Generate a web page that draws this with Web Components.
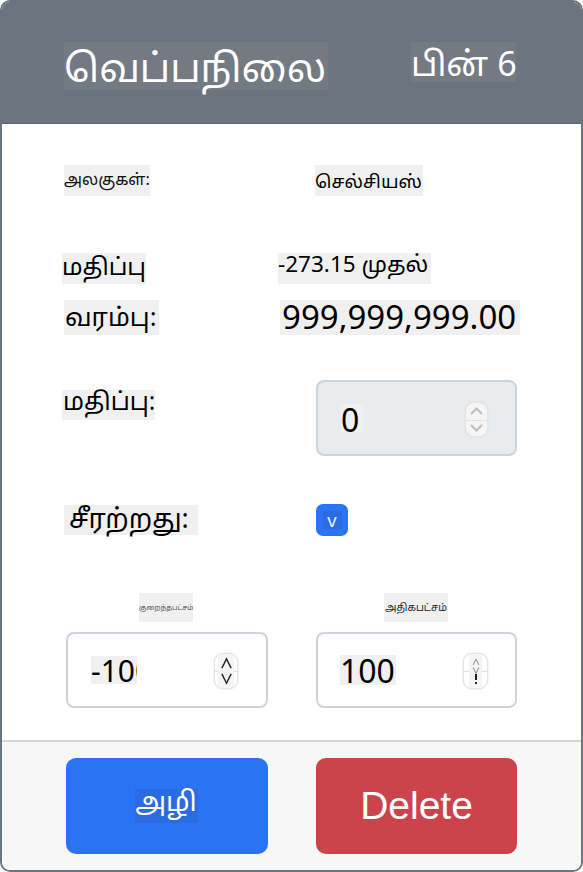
<!DOCTYPE html>
<html lang="ta">
<head>
<meta charset="utf-8">
<title>வெப்பநிலை</title>
<style>
html, body { margin: 0; background: #fff; }
body { font-family: "Noto Sans", "Noto Sans Tamil", sans-serif; }
</style>
</head>
<body>
<template id="patch-tpl">
<style>
:host {
    display: inline-flex;
    align-items: center;
    justify-content: var(--align, flex-start);
    box-sizing: border-box;
    background: var(--patch, #f0f0f0);
    white-space: pre;
    line-height: 1;
    font-family: "Noto Sans", "Noto Sans Tamil", sans-serif;
}
:host([clip]) { overflow: hidden; }
</style>
<slot></slot>
</template>

<template id="card-tpl">
<style>
:host {
    display: flex;
    flex-direction: column;
    box-sizing: border-box;
    width: 583px;
    height: 872px;
    border: 2px solid #6c757d;
    border-radius: 10px;
    overflow: hidden;
    background: #fff;
}
header {
    box-sizing: border-box;
    height: 122px;
    flex: none;
    background: #6c757d;
    color: #fff;
    display: grid;
    grid-template-columns: 347px 1fr;
    padding: 40px 0 0 62px;
    border-bottom: 1px solid #5c646b;
}
main { flex: 1; display: flex; flex-direction: column; }
footer {
    flex: none;
    box-sizing: border-box;
    height: 130px;
    background: #f7f7f7;
    border-top: 2px solid #d6d6d6;
    display: grid;
    grid-template-columns: 202px 201px;
    column-gap: 48px;
    padding: 16px 0 0 64px;
}
</style>
<header><slot name="title"></slot></header>
<main><slot></slot></main>
<footer><slot name="actions"></slot></footer>
</template>

<template id="row-tpl">
<style>
:host {
    display: grid;
    grid-template-columns: 250px 1fr;
    padding-left: 64px;
    box-sizing: border-box;
    height: var(--h, auto);
    margin-top: var(--top, 0);
    align-items: start;
}
</style>
<slot></slot>
</template>

<template id="num-tpl">
<style>
:host {
    display: flex;
    align-items: center;
    box-sizing: border-box;
    width: 201px;
    height: 76px;
    border: 2px solid #ced4da;
    border-radius: 8px;
    background: #fff;
    position: relative;
    padding-left: 22px;
    overflow: hidden;
}
:host([disabled]) { background: #e9ecef; }
.spin {
    position: absolute;
    right: var(--spin-right, 27px);
    top: var(--spin-top, 20px);
    width: var(--spin-w, 23px);
    height: var(--spin-h, 35px);
    box-sizing: border-box;
    border: 1px solid #e4e4e4;
    border-radius: 9px;
    background: #fff;
    box-shadow: 0 0 2px #d8d8d8;
    display: flex;
    flex-direction: column;
    overflow: hidden;
}
.spin::before {
    content: "";
    position: absolute;
    left: 0;
    right: 0;
    top: 50%;
    height: 1px;
    background: #e0e0e0;
}
:host([disabled]) .spin { background: #f5f5f5; }
.spin span {
    flex: 1;
    display: flex;
    align-items: center;
    justify-content: center;
}
svg { width: 15px; height: 10px; fill: none; stroke: #bdbdbd; stroke-width: 2; }
</style>
<slot></slot>
<div class="spin">
<slot name="spin">
<span><svg viewBox="0 0 15 10"><path d="M2 8 7.500 2.500 13 8"/></svg></span>
<span><svg viewBox="0 0 15 10"><path d="M2 2 7.500 7.500 13 2"/></svg></span>
</slot>
</div>
</template>

<template id="btn-tpl">
<style>
:host {
    display: flex;
    align-items: center;
    justify-content: center;
    box-sizing: border-box;
    height: 96px;
    border-radius: 10px;
    background: var(--bg, #2a73f4);
    color: #fff;
}
</style>
<slot></slot>
</template>

<template id="check-tpl">
<style>
:host {
    display: flex;
    align-items: center;
    justify-content: center;
    width: 32px;
    height: 32px;
    border-radius: 7px;
    background: #2a73f4;
}
</style>
<slot></slot>
</template>

<temp-card>
    <text-patch slot="title" style="width:264px;height:48px;font-size:39px;color:#fff;--patch:#737a82">வெப்பநிலை</text-patch>
    <text-patch slot="title" style="width:105px;height:40px;font-size:34px;color:#fff;--patch:#737a82;padding-top:1px">பின் 6</text-patch>

    <form-row style="--top:41px;--h:88px">
        <text-patch style="width:86px;height:31px;font-size:16px;color:#111;margin-left:-2px;padding-bottom:4px">அலகுகள்:</text-patch>
        <text-patch style="width:108px;height:31px;font-size:18.200px;color:#000;margin-left:-1px;padding-top:2px">செல்சியஸ்</text-patch>
    </form-row>
    <form-row style="--h:47px">
        <text-patch style="width:84px;height:31px;font-size:24px;color:#000;margin-left:-4px;padding-bottom:5px">மதிப்பு</text-patch>
        <text-patch style="width:153px;height:31px;font-size:22.500px;color:#000;margin-left:-38px;padding-bottom:8px">-273.15 முதல்</text-patch>
    </form-row>
    <form-row style="--h:80px">
        <text-patch style="width:95px;height:35px;font-size:25.500px;color:#000;padding-left:1px;margin-left:-2px;padding-bottom:2px">வரம்பு:</text-patch>
        <text-patch style="width:240px;height:35px;font-size:33px;color:#000;margin-left:-36px;padding-left:2px;padding-bottom:2px">999,999,999.00</text-patch>
    </form-row>
    <form-row style="--h:124px">
        <text-patch style="width:93px;height:30px;font-size:24.500px;color:#000;margin:10px 0 0 -4px;padding-left:1px;padding-bottom:8px">மதிப்பு:</text-patch>
        <num-field disabled><text-patch style="width:22px;height:28px;font-size:32px;color:#000;margin-left:1px;padding-top:3px">0</text-patch></num-field>
    </form-row>
    <form-row style="--h:89px">
        <text-patch style="width:134px;height:30px;font-size:27px;color:#000;padding-left:5px;margin:1px 0 0 -2px;padding-bottom:6px">சீரற்றது:</text-patch>
        <check-box><text-patch style="width:19px;height:18px;font-size:18.500px;color:#eaf1ff;--patch:#2a6be0;--align:center">v</text-patch></check-box>
    </form-row>
    <form-row style="--h:39px">
        <text-patch style="width:54px;height:29px;font-size:7px;color:#555;margin-left:73px">குறைந்தபட்சம்</text-patch>
        <text-patch style="width:64px;height:29px;font-size:10.200px;color:#222;margin-left:68px;padding-left:1px">அதிகபட்சம்</text-patch>
    </form-row>
    <form-row>
        <num-field style="width:202px;--spin-right:28px;--spin-top:19px;--spin-w:24px;--spin-h:36px">
            <text-patch clip style="width:46px;height:28px;font-size:30px;color:#000;margin-left:1px;padding-top:2px">-100</text-patch>
            <small-spin slot="spin" style="--mark:#222;--size:13px"></small-spin>
        </num-field>
        <num-field style="--spin-right:27px;--spin-top:19px;--spin-w:25px;--spin-h:36px">
            <text-patch style="width:56px;height:30px;font-size:32px;color:#000;padding-top:2px">100</text-patch>
            <small-spin slot="spin" style="--mark:#777;--size:8px" dots></small-spin>
        </num-field>
    </form-row>

    <action-button slot="actions"><text-patch style="width:63px;height:34px;font-size:27.500px;color:#fff;--patch:#2a6be0;--align:center;padding-bottom:10px;margin-right:2px">அழி</text-patch></action-button>
    <action-button slot="actions" style="--bg:#cb444c;font:39px 'Liberation Sans',sans-serif">Delete</action-button>
</temp-card>

<script>
// every element is just its template in an open shadow root
function register(name, tplId) {
  class Comp extends HTMLElement {
    constructor() {
      super();
      this.attachShadow({ mode: "open" });
      const tpl = document.getElementById(tplId);
      this.shadowRoot.appendChild(tpl.content.cloneNode(true));
    }
  }
  customElements.define(name, Comp);
}

register("text-patch", "patch-tpl");
register("temp-card", "card-tpl");
register("form-row", "row-tpl");
register("num-field", "num-tpl");
register("action-button", "btn-tpl");
register("check-box", "check-tpl");

// the spinner arrows that got redrawn as thin dark marks
class SmallSpin extends HTMLElement {
  constructor() {
    super();
    this.attachShadow({ mode: "open" });
    const dots = this.hasAttribute("dots");
    this.shadowRoot.innerHTML = `
      <style>
        :host {
          position: relative;
          display: flex;
          flex-direction: column;
          align-items: center;
          justify-content: center;
          height: 100%;
          background: #f4f4f4;
          margin: 0 ${dots ? 5 : 3}px;
        }
        svg { display: block; width: var(--size); fill: none; stroke: var(--mark); stroke-width: 1.5; }
        .dots { width: 4px; height: 10px; fill: #222; stroke: none; }
      </style>
      <svg viewBox="0 0 14 13"><path d="M2 12 7 2 12 12"/></svg>
      <svg viewBox="0 0 14 13" style="margin-top:${dots ? 1 : 3}px"><path d="M2 1 7 11 12 1"/></svg>
      ${dots ? '<svg class="dots" viewBox="0 0 4 10"><rect x="1" y="0" width="2" height="6"/><rect x="1" y="8" width="2" height="2"/></svg>' : ""}
    `;
  }
}
customElements.define("small-spin", SmallSpin);
</script>
</body>
</html>
